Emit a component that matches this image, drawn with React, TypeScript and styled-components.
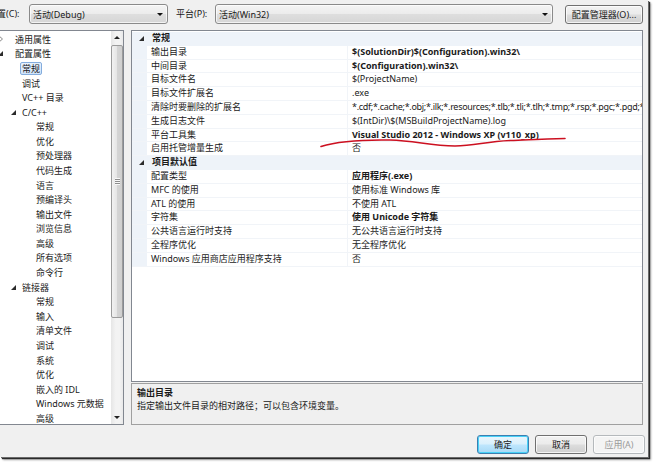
import React from "react";
import styled, { createGlobalStyle } from "styled-components";

const GlobalStyle = createGlobalStyle`
  html, body { margin: 0; padding: 0; background: #ffffff; overflow: hidden; }
  body {
    font-family: "Noto Sans", "Noto Sans CJK SC", sans-serif;
    font-size: 9px;
    color: #000;
  }
  * { box-sizing: border-box; }
`;

const Page = styled.div`
  width: 653px;
  height: 464px;
  overflow: hidden;
  background: #fff;
`;

const Dialog = styled.div`
  position: relative;
  width: 648px;
  height: 457px;
  background: #f0f0f0;
  box-shadow: 1px 1px 0 #6a6a6a, 2px 2px 1px #2a2a2a, 3px 3px 2px rgba(0, 0, 0, 0.35);
  display: flex;
  flex-direction: column;
  overflow: hidden;
`;

const TopBar = styled.div`
  height: 30px;
  display: flex;
  align-items: flex-start;
  padding-top: 4px;
  white-space: nowrap;
`;

const FieldLabel = styled.span<{ $w: number; $ml: number }>`
  flex: none;
  width: ${(p) => p.$w}px;
  margin-left: ${(p) => p.$ml}px;
  line-height: 20px;
  color: #1a1a1a;
`;

const Combo = styled.div<{ $w: number; $ml: number }>`
  flex: none;
  width: ${(p) => p.$w}px;
  margin-left: ${(p) => p.$ml}px;
  height: 20px;
  border: 1px solid #8a8a8a;
  border-radius: 3px;
  background: linear-gradient(#f4f4f4 0%, #ececec 48%, #dedede 52%, #d6d6d6 100%);
  box-shadow: inset 0 0 0 1px rgba(255, 255, 255, 0.7);
  display: flex;
  align-items: center;
  justify-content: space-between;
  padding: 0 3px 0 3px;
  color: #1a1a1a;
`;

const DropArrow = styled.span`
  width: 0;
  height: 0;
  border-left: 3px solid transparent;
  border-right: 3px solid transparent;
  border-top: 3px solid #111;
  margin-right: 1px;
`;

const Button = styled.button<{ $w: number; $variant?: "default" | "normal" | "disabled"; $ml?: number; $mt?: number }>`
  flex: none;
  width: ${(p) => p.$w}px;
  height: 19px;
  margin-left: ${(p) => p.$ml ?? 0}px;
  margin-top: ${(p) => p.$mt ?? 0}px;
  padding: 0;
  font-family: inherit;
  font-size: 9px;
  border-radius: 3px;
  cursor: default;
  border: 1px solid
    ${(p) => (p.$variant === "default" ? "#3c7fb1" : p.$variant === "disabled" ? "#b5b9bc" : "#707070")};
  color: ${(p) => (p.$variant === "disabled" ? "#9a9a9a" : "#1a1a1a")};
  background: ${(p) =>
    p.$variant === "default"
      ? "linear-gradient(#eaf6fd 0%, #d9f0fc 48%, #bee6fd 52%, #a7d9f5 100%)"
      : p.$variant === "disabled"
      ? "#f4f4f4"
      : "linear-gradient(#f2f2f2 0%, #ebebeb 48%, #dddddd 52%, #cfcfcf 100%)"};
  box-shadow: ${(p) =>
    p.$variant === "default"
      ? "inset 0 0 0 1px #48d1f7"
      : "inset 0 0 0 1px rgba(255,255,255,0.75)"};
`;

const Body = styled.div`
  height: 395px;
  display: flex;
`;

const TreePanel = styled.div`
  flex: none;
  width: 124px;
  height: 100%;
  background: #fff;
  border: 1px solid #828790;
  border-left: none;
  display: flex;
`;

const TreeList = styled.div`
  flex: 1;
  padding-top: 1px;
  overflow: hidden;
  white-space: nowrap;
`;

const TreeRow = styled.div`
  height: 14.58px;
  display: flex;
  align-items: center;
  color: #1a1a1a;
`;

const ToggleSlot = styled.span<{ $x: number; $w: number }>`
  flex: none;
  margin-left: ${(p) => p.$x}px;
  width: ${(p) => p.$w}px;
  display: flex;
  align-items: center;
`;

const ExpandedMark = styled.span`
  width: 0;
  height: 0;
  border-left: 5px solid transparent;
  border-bottom: 5px solid #2b2b2b;
`;

const TreeLabel = styled.span<{ $selected?: boolean }>`
  line-height: 11px;
  padding: 0 1px;
  margin-left: -2px;
  border: 1px solid ${(p) => (p.$selected ? "#84acdd" : "transparent")};
  border-radius: 2px;
  background: ${(p) => (p.$selected ? "linear-gradient(#e6f1fd, #cfe3fb)" : "transparent")};
`;

const Scrollbar = styled.div`
  flex: none;
  width: 12px;
  display: flex;
  flex-direction: column;
  background: linear-gradient(to right, #e6e6e6, #f3f3f3 40%, #f3f3f3 70%, #e9e9e9);
`;

const ScrollButton = styled.div`
  height: 13px;
  display: flex;
  align-items: center;
  justify-content: center;
`;

const ScrollArrow = styled.span<{ $down?: boolean }>`
  width: 0;
  height: 0;
  border-left: 3px solid transparent;
  border-right: 3px solid transparent;
  ${(p) => (p.$down ? "border-top: 3px solid #222;" : "border-bottom: 3px solid #222;")}
`;

const Thumb = styled.div`
  margin: 1px 0 0 0;
  height: 273px;
  border: 1px solid #9b9b9b;
  border-radius: 2px;
  background: linear-gradient(to right, #f2f2f2, #e6e6e6 45%, #d4d4d4 55%, #cfcfcf);
  display: flex;
  align-items: center;
  justify-content: center;
`;

const Grip = styled.span`
  width: 5px;
  height: 7px;
  background: repeating-linear-gradient(#f8f8f8 0 1px, #8d8d8d 1px 2px);
`;

const Track = styled.div`
  flex: 1;
`;

const RightColumn = styled.div`
  flex: none;
  width: 512px;
  margin-left: 7px;
  display: flex;
  flex-direction: column;
  gap: 1px;
`;

const Grid = styled.div`
  height: 352px;
  border: 1px solid #828790;
  background: #fff;
  padding-top: 1px;
  overflow: hidden;
`;

const GridRow = styled.div<{ $category?: boolean }>`
  height: 13.8px;
  display: grid;
  grid-template-columns: 15px 200px 1fr;
  background: ${(p) => (p.$category ? "#eef3f9" : "#fff")};
  border-bottom: 1px solid ${(p) => (p.$category ? "#eef3f9" : "#f1f4f8")};
  white-space: nowrap;
`;

const Gutter = styled.div`
  background: #eef3f9;
  display: flex;
  align-items: center;
  padding-left: 7px;
`;

const NameCell = styled.div<{ $category?: boolean }>`
  padding-left: ${(p) => (p.$category ? 5 : 4)}px;
  line-height: 12.8px;
  font-weight: ${(p) => (p.$category ? 700 : 400)};
  color: #1a1a1a;
  overflow: hidden;
`;

const ValueCell = styled.div<{ $bold?: boolean; $tight?: boolean }>`
  padding-left: 4px;
  line-height: 12.8px;
  font-weight: ${(p) => (p.$bold ? 700 : 400)};
  letter-spacing: ${(p) => (p.$tight ? "-0.3px" : "normal")};
  color: #1a1a1a;
  overflow: hidden;
  border-left: 1px solid #f1f4f8;
`;

const Description = styled.div`
  height: 42px;
  border: 1px solid #a0a0a0;
  background: #f0f0f0;
  padding: 2px 5px;
  color: #1a1a1a;
`;

const DescTitle = styled.div`
  font-weight: 700;
  line-height: 13px;
`;

const DescText = styled.div`
  line-height: 13px;
`;

const Footer = styled.div`
  flex: 1;
  display: flex;
  justify-content: flex-end;
  align-items: flex-start;
  gap: 6px;
  padding: 10px 3px 0 0;
`;

const Annotation = styled.svg`
  position: absolute;
  left: 0;
  top: 0;
  pointer-events: none;
`;

type TreeItem = {
  label: string;
  level: 0 | 1 | 2;
  toggle?: "collapsed" | "expanded";
  selected?: boolean;
};

const level2 = (labels: string[]): TreeItem[] => labels.map((label) => ({ label, level: 2 }));

const tree: TreeItem[] = [
  { label: "通用属性", level: 0, toggle: "collapsed" },
  { label: "配置属性", level: 0, toggle: "expanded" },
  { label: "常规", level: 1, selected: true },
  { label: "调试", level: 1 },
  { label: "VC++ 目录", level: 1 },
  { label: "C/C++", level: 1, toggle: "expanded" },
  ...level2(["常规", "优化", "预处理器", "代码生成", "语言", "预编译头", "输出文件", "浏览信息", "高级", "所有选项", "命令行"]),
  { label: "链接器", level: 1, toggle: "expanded" },
  ...level2(["常规", "输入", "清单文件", "调试", "系统", "优化", "嵌入的 IDL", "Windows 元数据", "高级"]),
];

const slot: Record<number, { x: number; w: number }> = {
  0: { x: -2, w: 17 },
  1: { x: 11, w: 11 },
  2: { x: 25, w: 11 },
};

type Prop = [string, string, boolean];

const sections: { title: string; props: Prop[] }[] = [
  {
    title: "常规",
    props: [
      ["输出目录", "$(SolutionDir)$(Configuration).win32\\", true],
      ["中间目录", "$(Configuration).win32\\", true],
      ["目标文件名", "$(ProjectName)", false],
      ["目标文件扩展名", ".exe", false],
      ["清除时要删除的扩展名", "*.cdf;*.cache;*.obj;*.ilk;*.resources;*.tlb;*.tli;*.tlh;*.tmp;*.rsp;*.pgc;*.pgd;*", false],
      ["生成日志文件", "$(IntDir)\\$(MSBuildProjectName).log", false],
      ["平台工具集", "Visual Studio 2012 - Windows XP (v110_xp)", true],
      ["启用托管增量生成", "否", false],
    ],
  },
  {
    title: "项目默认值",
    props: [
      ["配置类型", "应用程序(.exe)", true],
      ["MFC 的使用", "使用标准 Windows 库", false],
      ["ATL 的使用", "不使用 ATL", false],
      ["字符集", "使用 Unicode 字符集", true],
      ["公共语言运行时支持", "无公共语言运行时支持", false],
      ["全程序优化", "无全程序优化", false],
      ["Windows 应用商店应用程序支持", "否", false],
    ],
  },
];

function CollapsedMark() {
  return (
    <svg width="5" height="8" viewBox="0 0 5 8">
      <polygon points="0.5,0.5 4.5,4 0.5,7.5" fill="#fff" stroke="#8a8a8a" strokeWidth="1" />
    </svg>
  );
}

export default function App() {
  return (
    <Page>
      <GlobalStyle />
      <Dialog>
        <TopBar>
          <FieldLabel $w={34} $ml={-12}>配置(C):</FieldLabel>
          <Combo $w={139} $ml={7}>
            <span>活动(Debug)</span>
            <DropArrow />
          </Combo>
          <FieldLabel $w={39} $ml={8}>平台(P):</FieldLabel>
          <Combo $w={338} $ml={0}>
            <span>活动(Win32)</span>
            <DropArrow />
          </Combo>
          <Button $w={78} $ml={12} $mt={1} $variant="normal">
            配置管理器(O)...
          </Button>
        </TopBar>

        <Body>
          <TreePanel>
            <TreeList>
              {tree.map((item, i) => (
                <TreeRow key={i}>
                  <ToggleSlot $x={slot[item.level].x} $w={slot[item.level].w}>
                    {item.toggle === "expanded" && <ExpandedMark />}
                    {item.toggle === "collapsed" && <CollapsedMark />}
                  </ToggleSlot>
                  <TreeLabel $selected={item.selected}>{item.label}</TreeLabel>
                </TreeRow>
              ))}
            </TreeList>
            <Scrollbar>
              <ScrollButton>
                <ScrollArrow />
              </ScrollButton>
              <Thumb>
                <Grip />
              </Thumb>
              <Track />
              <ScrollButton>
                <ScrollArrow $down />
              </ScrollButton>
            </Scrollbar>
          </TreePanel>

          <RightColumn>
            <Grid>
              {sections.map((section) => (
                <React.Fragment key={section.title}>
                  <GridRow $category>
                    <Gutter>
                      <ExpandedMark />
                    </Gutter>
                    <NameCell $category>{section.title}</NameCell>
                    <div />
                  </GridRow>
                  {section.props.map(([name, value, bold]) => (
                    <GridRow key={name}>
                      <Gutter />
                      <NameCell>{name}</NameCell>
                      <ValueCell $bold={bold} $tight={value.length > 60}>
                        {value}
                      </ValueCell>
                    </GridRow>
                  ))}
                </React.Fragment>
              ))}
            </Grid>
            <Description>
              <DescTitle>输出目录</DescTitle>
              <DescText>指定输出文件目录的相对路径；可以包含环境变量。</DescText>
            </Description>
          </RightColumn>
        </Body>

        <Footer>
          <Button $w={52} $variant="default">确定</Button>
          <Button $w={52} $variant="normal">取消</Button>
          <Button $w={52} $variant="disabled">应用(A)</Button>
        </Footer>

        <Annotation width="648" height="457" viewBox="0 0 648 457">
          <path
            d="M321,146.5 C335,142 360,139.5 390,140 C415,140.5 430,146 455,146 C475,146 485,141.5 510,140.5 C535,139.5 555,138.5 565,138.5"
            fill="none"
            stroke="#cc1020"
            strokeWidth="1.6"
            strokeLinecap="round"
          />
        </Annotation>
      </Dialog>
    </Page>
  );
}
